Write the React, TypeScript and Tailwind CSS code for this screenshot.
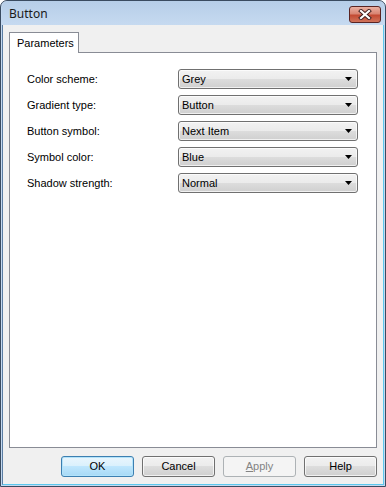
import React from 'react';

const rows = [
  { label: 'Color scheme:', value: 'Grey' },
  { label: 'Gradient type:', value: 'Button' },
  { label: 'Button symbol:', value: 'Next Item' },
  { label: 'Symbol color:', value: 'Blue' },
  { label: 'Shadow strength:', value: 'Normal' },
];

// 콤보박스 (Win7 스타일)
function Combo({ value }: { value: string }) {
  return (
    <div className="w-[180px] h-[20px] rounded-[3px] border border-[#707070] bg-[linear-gradient(to_bottom,#f2f2f2_0%,#ebebeb_50%,#dddddd_50%,#cfcfcf_100%)] flex items-center pl-[3px] pr-[5px] shadow-[inset_0_0_0_1px_rgba(255,255,255,0.7)]">
      <span className="flex-1 text-[11px] text-black leading-none">{value}</span>
      <svg width="7" height="4" viewBox="0 0 7 4">
        <path d="M0 0H7L3.5 4Z" fill="#000" />
      </svg>
    </div>
  );
}

function DlgButton({ children, variant }: { children: React.ReactNode; variant?: 'default' | 'disabled' }) {
  const cls =
    variant === 'default'
      ? 'border-[#3c7fb1] bg-[linear-gradient(to_bottom,#eaf6fd_0%,#d9f0fc_50%,#bee6fd_50%,#a7d9f5_100%)] text-black shadow-[inset_0_0_0_1px_#b3e3fa]'
      : variant === 'disabled'
        ? 'border-[#adb2b5] bg-[#f4f4f4] text-[#838383]'
        : 'border-[#707070] bg-[linear-gradient(to_bottom,#f2f2f2_0%,#ebebeb_50%,#dddddd_50%,#cfcfcf_100%)] text-black shadow-[inset_0_0_0_1px_rgba(255,255,255,0.7)]';
  return (
    <div className={`w-[73px] h-[21px] rounded-[3px] border flex items-center justify-center text-[11px] ${cls}`}>
      {children}
    </div>
  );
}

export default function App() {
  return (
    <div className="w-[386px] h-[487px] flex flex-col rounded-t-[7px] border border-[#3a4b60] bg-[#c4d9f0] px-[1px] pb-[1px] font-['Liberation_Sans',Arial,sans-serif]">
      {/* 타이틀 바 */}
      <div className="h-[24px] flex items-start justify-between pl-[7px] pr-[3px] rounded-t-[6px] bg-[linear-gradient(to_bottom,#b6cee8,#c6daf0)]">
        <span className="mt-[4px] text-[12px] text-[#1a1a1a] font-['Noto_Sans',sans-serif]">Button</span>
        <div className="mt-[5px] w-[32px] h-[17px] rounded-[3px] border border-[#5a2422] bg-[linear-gradient(to_bottom,#eab0a2_0%,#d98573_45%,#c34a33_55%,#d0735a_100%)] flex items-center justify-center">
          <svg width="14" height="11" viewBox="0 0 14 11">
            <path d="M3 2L11 9M11 2L3 9" stroke="#3d1d1d" strokeWidth="4" strokeLinecap="square" />
            <path d="M3 2L11 9M11 2L3 9" stroke="#ffffff" strokeWidth="2.2" strokeLinecap="square" />
          </svg>
        </div>
      </div>

      {/* 클라이언트 영역 */}
      <div className="flex-1 flex flex-col bg-[#f0f0f0] border-l border-l-[#5b7da3] border-r border-r-[#5cc8ee] border-b border-b-[#5cc8ee] pt-[7px] px-[6px] pb-[7px]">
        {/* 탭 */}
        <div className="flex">
          <div className="relative z-10 -mb-px h-[21px] w-[70px] bg-white border border-b-0 border-[#898c95] flex items-center pl-[7px] text-[11px] text-black">
            Parameters
          </div>
        </div>
        <div className="flex-1 bg-white border border-[#898c95] pt-[16px] pl-[17px]">
          <div className="flex flex-col gap-[6px]">
            {rows.map((r) => (
              <div key={r.label} className="flex items-center">
                <span className="w-[151px] text-[11px] text-black">{r.label}</span>
                <Combo value={r.value} />
              </div>
            ))}
          </div>
        </div>

        {/* 버튼 */}
        <div className="mt-[8px] flex justify-end gap-[8px]">
          <DlgButton variant="default">OK</DlgButton>
          <DlgButton>Cancel</DlgButton>
          <DlgButton variant="disabled">
            <span>
              <span className="underline">A</span>pply
            </span>
          </DlgButton>
          <DlgButton>Help</DlgButton>
        </div>
      </div>
    </div>
  );
}
